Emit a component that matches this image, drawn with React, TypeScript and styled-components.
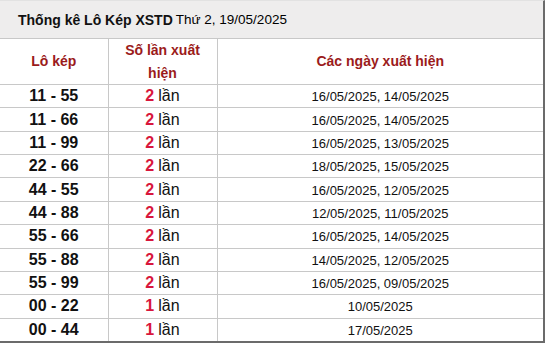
import React from "react";
import styled, { createGlobalStyle } from "styled-components";

const GlobalStyle = createGlobalStyle`
  body {
    margin: 0;
    background: #fff;
    font-family: "Liberation Sans", Arial, sans-serif;
  }
`;

const Wrapper = styled.div`
  width: 543px;
  border-right: 2px solid #6b6b6b;
  border-bottom: 2px solid #6b6b6b;
  border-top: 1px solid #e2e2e2;
`;

const Title = styled.div`
  height: 37px;
  display: flex;
  align-items: center;
  padding-left: 18px;
  background: #eeeded;
  border-bottom: 1px solid #c8c8c8;
  font-size: 14px;
  color: #111;
`;

const Strong = styled.b`
  font-weight: bold;
  margin-right: 3px;
`;

const Light = styled.span`
  font-size: 13.5px;
  color: #000;
`;

const Table = styled.table`
  width: 100%;
  border-collapse: collapse;
  table-layout: fixed;
`;

const Col = styled.col<{ $w?: number }>`
  width: ${(p) => (p.$w ? `${p.$w}px` : "auto")};
`;

const Th = styled.th`
  box-sizing: border-box;
  height: 45px;
  padding: 0 12px;
  color: #9b1b1b;
  font-size: 14px;
  font-weight: bold;
  line-height: 22.5px;
  text-align: center;
  border-bottom: 1px solid #c8c8c8;
  border-right: 1px solid #c8c8c8;
  &:last-child {
    border-right: none;
  }
`;

const Td = styled.td`
  height: 22.36px;
  padding: 0;
  text-align: center;
  border-bottom: 1px solid #c8c8c8;
  border-right: 1px solid #c8c8c8;
  &:last-child {
    border-right: none;
  }
  tr:last-child & {
    border-bottom: none;
  }
`;

const Pair = styled.span`
  font-size: 16px;
  font-weight: bold;
  color: #111;
`;

const Count = styled.span`
  font-size: 16px;
  color: #111;
  b {
    color: #d8163c;
    margin-right: 4px;
  }
`;

const Dates = styled.span`
  font-size: 13px;
  color: #111;
`;

type Row = { pair: string; count: number; dates: string };

const rows: Row[] = [
  { pair: "11 - 55", count: 2, dates: "16/05/2025, 14/05/2025" },
  { pair: "11 - 66", count: 2, dates: "16/05/2025, 14/05/2025" },
  { pair: "11 - 99", count: 2, dates: "16/05/2025, 13/05/2025" },
  { pair: "22 - 66", count: 2, dates: "18/05/2025, 15/05/2025" },
  { pair: "44 - 55", count: 2, dates: "16/05/2025, 12/05/2025" },
  { pair: "44 - 88", count: 2, dates: "12/05/2025, 11/05/2025" },
  { pair: "55 - 66", count: 2, dates: "16/05/2025, 14/05/2025" },
  { pair: "55 - 88", count: 2, dates: "14/05/2025, 12/05/2025" },
  { pair: "55 - 99", count: 2, dates: "16/05/2025, 09/05/2025" },
  { pair: "00 - 22", count: 1, dates: "10/05/2025" },
  { pair: "00 - 44", count: 1, dates: "17/05/2025" },
];

export default function App() {
  return (
    <>
      <GlobalStyle />
      <Wrapper>
        <Title>
          <Strong>Thống kê Lô Kép XSTD</Strong>
          <Light>Thứ 2, 19/05/2025</Light>
        </Title>
        <Table>
          <colgroup>
            <Col $w={108} />
            <Col $w={109} />
            <Col />
          </colgroup>
          <thead>
            <tr>
              <Th>Lô kép</Th>
              <Th>Số lần xuất hiện</Th>
              <Th>Các ngày xuất hiện</Th>
            </tr>
          </thead>
          <tbody>
            {rows.map((r) => (
              <tr key={r.pair}>
                <Td>
                  <Pair>{r.pair}</Pair>
                </Td>
                <Td>
                  <Count>
                    <b>{r.count}</b>lần
                  </Count>
                </Td>
                <Td>
                  <Dates>{r.dates}</Dates>
                </Td>
              </tr>
            ))}
          </tbody>
        </Table>
      </Wrapper>
    </>
  );
}
